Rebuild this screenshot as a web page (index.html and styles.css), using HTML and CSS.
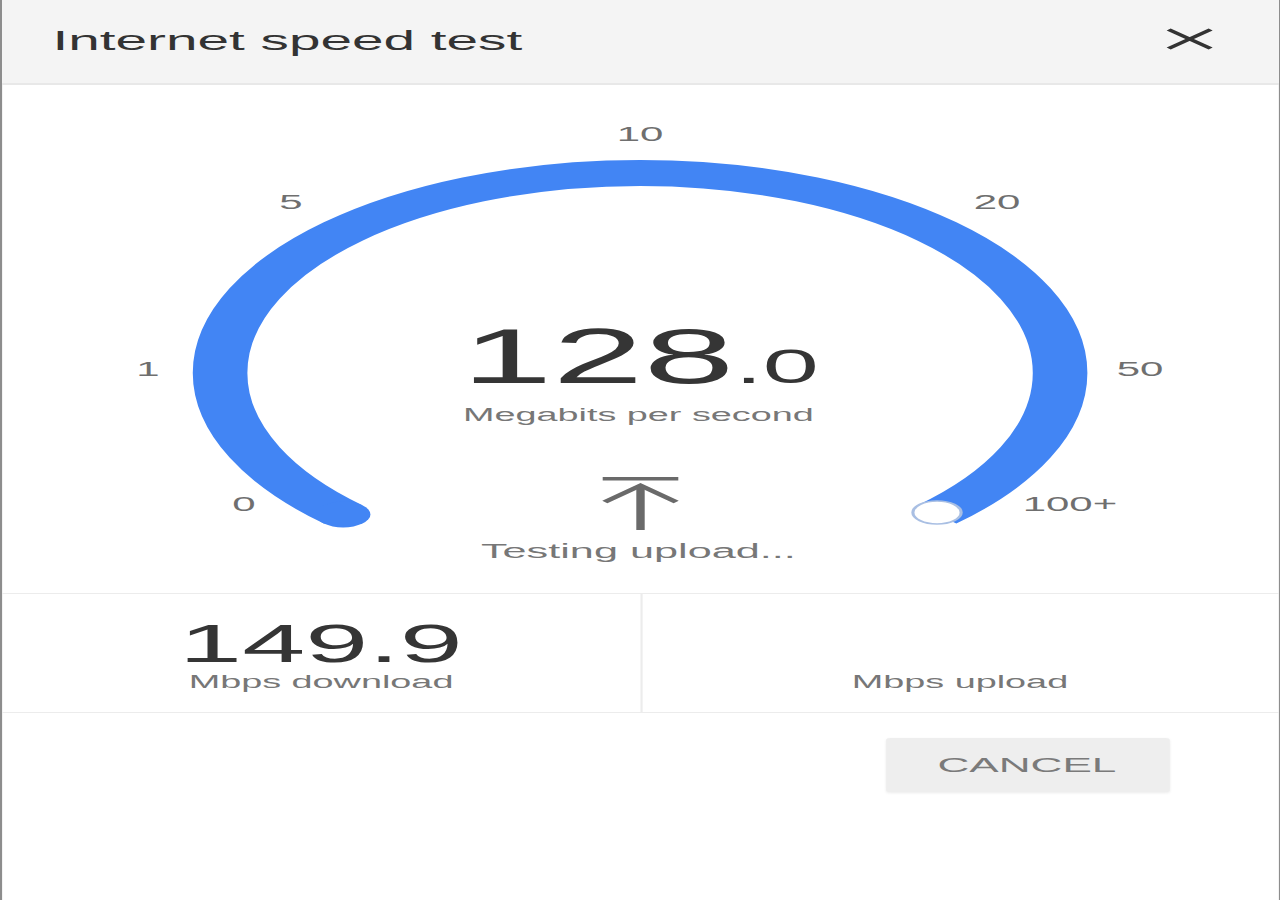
FILE: index.html
```html
<html>
<head>
    <meta charset="utf-8">
    <title>Internet speed test</title>
    <link rel="stylesheet" href="styles.css">
</head>
<body>
    <div class="dialog">
        <div class="header">
            <div class="title">Internet speed test</div>
            <svg class="close" width="23" height="22" viewBox="0 0 23 22">
                <path d="M1.5 1.5 L21.5 20.5 M21.5 1.5 L1.5 20.5" />
            </svg>
        </div>

        <!-- dial: arc, scale labels, current reading -->
        <svg class="gauge" width="607.5" height="508" viewBox="1 85 607.5 508">
            <path class="arc" d="M163.4 514.4 A200 200 0 1 1 446.2 514.4" />
            <circle class="arc-cap" cx="163.4" cy="514.4" r="13" />
            <circle class="knob" cx="446.2" cy="512.5" r="11.5" />

            <text class="tick" x="304.8" y="141">10</text>
            <text class="tick" x="138.6" y="209">5</text>
            <text class="tick" x="474.8" y="209">20</text>
            <text class="tick" x="70.5" y="376">1</text>
            <text class="tick" x="542.9" y="376">50</text>
            <text class="tick" x="116.2" y="511">0</text>
            <text class="tick" x="509.5" y="511">100+</text>

            <text class="reading" x="304.8" y="383"><tspan class="reading-int">128</tspan><tspan class="reading-dec">.0</tspan></text>
            <text class="unit" x="304" y="421">Megabits per second</text>

            <g class="upload-icon">
                <path class="bar" d="M287 478.8 L323 478.8" />
                <path d="M288 502 L305 485.5 L322 502" />
                <path class="stem" d="M305 487 L305 530" />
            </g>
            <text class="status" x="304" y="558">Testing upload...</text>
        </svg>

        <div class="stats">
            <div class="stat">
                <div class="stat-value">149.9</div>
                <div class="stat-label">Mbps download</div>
            </div>
            <div class="stat">
                <div class="stat-value"></div>
                <div class="stat-label">Mbps upload</div>
            </div>
        </div>

        <div class="actions">
            <button class="btn">CANCEL</button>
        </div>
    </div>
</body>
</html>
```

FILE: styles.css
```css
* {
    margin: 0;
    padding: 0;
    box-sizing: border-box;
}

html,
body {
    width: 1280px;
    height: 900px;
    overflow: hidden;
    background: #fff;
}

body {
    font-family: "Liberation Sans", Arial, sans-serif;
}

/* the capture is stretched sideways, so the dialog is laid out narrow and widened */
.dialog {
    width: 609.5px;
    height: 900px;
    background: #fff;
    border-left: 1px solid #8d8d8d;
    border-right: 1px solid #8d8d8d;
    transform: scaleX(2.1);
    transform-origin: 0 0;
}

.header {
    height: 85px;
    display: flex;
    justify-content: space-between;
    align-items: flex-start;
    padding: 26px 31px 0 24px;
    background: #f4f4f4;
    border-bottom: 2px solid #e8e8e8;
}

.title {
    font-size: 27px;
    line-height: 30px;
    color: #333;
}

.close {
    margin-top: 2px;
}

.close path {
    stroke: #333;
    stroke-width: 2.8;
    fill: none;
}

.gauge {
    display: block;
}

.arc {
    fill: none;
    stroke: #4285f4;
    stroke-width: 26;
}

.arc-cap {
    fill: #4285f4;
}

.knob {
    fill: #fff;
    stroke: #a9bfe3;
    stroke-width: 1.5;
}

.tick {
    font-family: "Liberation Sans", Arial, sans-serif;
    font-size: 20px;
    fill: #6f6f6f;
    text-anchor: middle;
}

.reading {
    font-family: "Liberation Sans", Arial, sans-serif;
    fill: #353535;
    text-anchor: middle;
}

.reading-int {
    font-size: 78px;
}

.reading-dec {
    font-size: 48px;
}

.unit,
.status {
    font-family: "Liberation Sans", Arial, sans-serif;
    font-size: 18px;
    fill: #777;
    text-anchor: middle;
}

.status {
    font-size: 20.6px;
}

.upload-icon path {
    fill: none;
    stroke: #6a6a6a;
    stroke-width: 3.5;
}

.upload-icon .stem {
    stroke-width: 4;
}

.stats {
    display: grid;
    grid-template-columns: 1fr 1fr;
    border-top: 1px solid #ececec;
    border-bottom: 1px solid #ececec;
}

.stat {
    padding: 21px 0 19px;
    text-align: center;
}

.stat + .stat {
    border-left: 1px solid #ececec;
}

.stat-value {
    height: 56px;
    font-size: 54px;
    line-height: 56px;
    color: #353535;
}

.stat-label {
    font-size: 18px;
    line-height: 22px;
    color: #777;
}

.actions {
    display: flex;
    justify-content: flex-end;
    padding: 25px 52px 0 0;
}

.btn {
    width: 135px;
    height: 54px;
    border: none;
    border-radius: 2px;
    background: #eeeeee;
    box-shadow: 0 1px 2px rgba(0, 0, 0, 0.08);
    font-family: "Liberation Sans", Arial, sans-serif;
    font-size: 21px;
    color: #7a7a7a;
}
```
